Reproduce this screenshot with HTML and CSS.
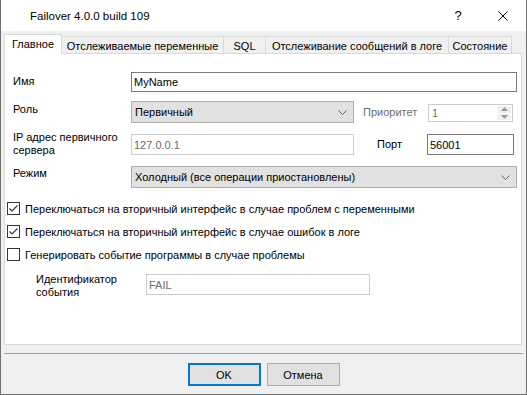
FILE: index.html
```html
<!DOCTYPE html>
<html>
<head>
<meta charset="utf-8">
<link rel="stylesheet" href="styles.css">
</head>
<body>
<div class="window">
  <div class="titlebar">
    <span class="title">Failover 4.0.0 build 109</span>
    <span class="help">?</span>
    <span class="close"><svg width="10" height="10" viewBox="0 0 10 10"><path d="M0.5 0.5L9.5 9.5M9.5 0.5L0.5 9.5" stroke="#000" stroke-width="1" fill="none"/></svg></span>
  </div>
  <div class="content">
    <div class="tabs">
      <div class="tab active w1">Главное</div>
      <div class="tab w2">Отслеживаемые переменные</div>
      <div class="tab w3">SQL</div>
      <div class="tab w4">Отслеживание сообщений в логе</div>
      <div class="tab w5">Состояние</div>
    </div>
    <div class="panel">
      <div class="row row-name">
        <div class="label lbl-name">Имя</div>
        <div class="field wide">MyName</div>
      </div>
      <div class="row row-role">
        <div class="label lbl-role">Роль</div>
        <div class="field combo half">
          <span>Первичный</span>
          <svg class="chev" width="9" height="5" viewBox="0 0 9 5"><path d="M0.5 0.5L4.5 4.5L8.5 0.5" stroke="#606060" fill="none"/></svg>
        </div>
        <div class="sublabel disabled-text prio">Приоритет</div>
        <div class="field disabled spinner">
          <span class="spin-val">1</span>
          <div class="spin-btns">
            <div class="spin-btn"><svg width="7" height="4" viewBox="0 0 7 4"><path d="M3.5 0L7 4H0Z" fill="#9a9a9a"/></svg></div>
            <div class="spin-btn"><svg width="7" height="4" viewBox="0 0 7 4"><path d="M0 0H7L3.5 4Z" fill="#9a9a9a"/></svg></div>
          </div>
        </div>
      </div>
      <div class="row row-ip">
        <div class="label lbl-ip">IP адрес первичного<br>сервера</div>
        <div class="field disabled half">127.0.0.1</div>
        <div class="sublabel port-lbl">Порт</div>
        <div class="field port">56001</div>
      </div>
      <div class="row row-mode">
        <div class="label lbl-mode">Режим</div>
        <div class="field combo wide">
          <span>Холодный (все операции приостановлены)</span>
          <svg class="chev" width="9" height="5" viewBox="0 0 9 5"><path d="M0.5 0.5L4.5 4.5L8.5 0.5" stroke="#606060" fill="none"/></svg>
        </div>
      </div>
      <div class="cb-row cb1">
        <span class="cb"><svg width="11" height="11" viewBox="0 0 11 11"><path d="M1.5 5.5L4 8L9.5 2.5" stroke="#333" stroke-width="1.1" fill="none"/></svg></span>
        <span>Переключаться на вторичный интерфейс в случае проблем с переменными</span>
      </div>
      <div class="cb-row cb2">
        <span class="cb"><svg width="11" height="11" viewBox="0 0 11 11"><path d="M1.5 5.5L4 8L9.5 2.5" stroke="#333" stroke-width="1.1" fill="none"/></svg></span>
        <span>Переключаться на вторичный интерфейс в случае ошибок в логе</span>
      </div>
      <div class="cb-row cb3">
        <span class="cb"></span>
        <span>Генерировать событие программы в случае проблемы</span>
      </div>
      <div class="row row-id">
        <div class="label lbl-id">Идентификатор<br>события</div>
        <div class="field disabled idfield">FAIL</div>
      </div>
    </div>
    <div class="sep"></div>
    <div class="buttons">
      <button class="btn default">OK</button>
      <button class="btn">Отмена</button>
    </div>
  </div>
</div>
</body>
</html>
```

FILE: styles.css
```css
* { box-sizing: border-box; }
html, body { margin: 0; padding: 0; }
body {
  width: 527px;
  height: 395px;
  overflow: hidden;
  background: #fff;
  font-family: "Liberation Sans", Arial, sans-serif;
  font-size: 11px;
  color: #000;
}
.window {
  width: 527px;
  height: 395px;
  border: 1px solid #707070;
  border-top: none;
  display: flex;
  flex-direction: column;
  background: #f0f0f0;
}
.titlebar {
  height: 31px;
  flex-shrink: 0;
  background: #fff;
  display: flex;
  align-items: center;
}
.title {
  flex: 1;
  padding-left: 29px;
  font-size: 11.5px;
}
.help {
  width: 30px;
  margin-right: 7px;
  text-align: center;
  font-size: 13px;
}
.close {
  width: 46px;
  display: flex;
  justify-content: center;
}
.content {
  flex: 1;
  display: flex;
  flex-direction: column;
  padding-top: 3px;
}
.tabs {
  display: flex;
  align-items: flex-end;
  height: 19px;
  padding-left: 3px;
  position: relative;
  z-index: 1;
}
.tab {
  height: 17px;
  border: 1px solid #d9d9d9;
  border-bottom: none;
  margin-left: -1px;
  display: flex;
  align-items: center;
  justify-content: center;
  padding-top: 1px;
  background: #f0f0f0;
  white-space: nowrap;
}
.tab.active {
  height: 20px;
  margin-left: 0;
  margin-bottom: -1px;
  padding-top: 0;
  padding-bottom: 2px;
  background: #fff;
}
.w1 { width: 58px; }
.w2 { width: 163px; }
.w3 { width: 43px; }
.w4 { width: 184px; }
.w5 { width: 64px; }
.panel {
  margin-left: 3px;
  width: 518px;
  height: 292px;
  flex-shrink: 0;
  border: 1px solid #d9d9d9;
  background: #fff;
  padding-left: 2px;
  display: flex;
  flex-direction: column;
}
.row {
  display: flex;
  align-items: flex-start;
  padding-left: 6px;
}
.label {
  width: 118px;
  flex-shrink: 0;
  line-height: 13px;
}
.row-name { margin-top: 18px; height: 20px; }
.row-role { margin-top: 9px; height: 22px; }
.row-ip { margin-top: 11px; height: 21px; }
.row-mode { margin-top: 11px; height: 22px; }
.row-id { margin-top: 13px; height: 21px; padding-left: 29px; }
.lbl-name { padding-top: 3px; }
.lbl-role { padding-top: 2px; }
.lbl-ip { margin-top: -3px; }
.lbl-mode { padding-top: 1px; }
.lbl-id { width: 110px; margin-top: -1px; }
.field {
  height: 100%;
  border: 1px solid #7a7a7a;
  background: #fff;
  padding-left: 2px;
  display: flex;
  align-items: center;
  white-space: nowrap;
}
.field.disabled {
  border-color: #cccccc;
  color: #6d6d6d;
}
.combo {
  border-color: #adadad;
  background: #e1e1e1;
  justify-content: space-between;
  padding: 0 6px 0 3px;
}
.wide { width: 386px; }
.half { width: 223px; }
.sublabel {
  line-height: 13px;
  flex-shrink: 0;
}
.disabled-text { color: #6d6d6d; }
.prio {
  margin-left: 9px;
  width: 65px;
  padding-top: 5px;
}
.spinner {
  width: 85px;
  height: 18px;
  margin-top: 3px;
  padding-left: 3px;
  justify-content: space-between;
  padding-right: 1px;
}
.spin-btns {
  width: 14px;
  height: 14px;
  display: flex;
  flex-direction: column;
  gap: 1px;
}
.spin-btn {
  flex: 1;
  background: #f0f0f0;
  display: flex;
  align-items: center;
  justify-content: center;
}
.port-lbl {
  margin-left: 23px;
  width: 50px;
  padding-top: 4px;
}
.port { width: 87px; }
.cb-row {
  display: flex;
  align-items: center;
  height: 13px;
  white-space: nowrap;
}
.cb1 { margin-top: 14px; }
.cb2 { margin-top: 10px; }
.cb3 { margin-top: 10px; }
.cb {
  width: 13px;
  height: 13px;
  border: 1px solid #333;
  background: #fff;
  margin-right: 5px;
  display: flex;
  flex-shrink: 0;
}
.idfield { width: 224px; }
.sep {
  margin: 8px 0 0 3px;
  width: 519px;
  height: 1px;
  background: #a0a0a0;
}
.buttons {
  display: flex;
  justify-content: center;
  gap: 6px;
  margin-top: 9px;
}
.btn {
  width: 73px;
  height: 23px;
  padding: 0;
  background: #e1e1e1;
  border: 1px solid #adadad;
  font-family: inherit;
  font-size: 11px;
  color: #000;
}
.btn.default { border: 2px solid #0078d7; }
```
